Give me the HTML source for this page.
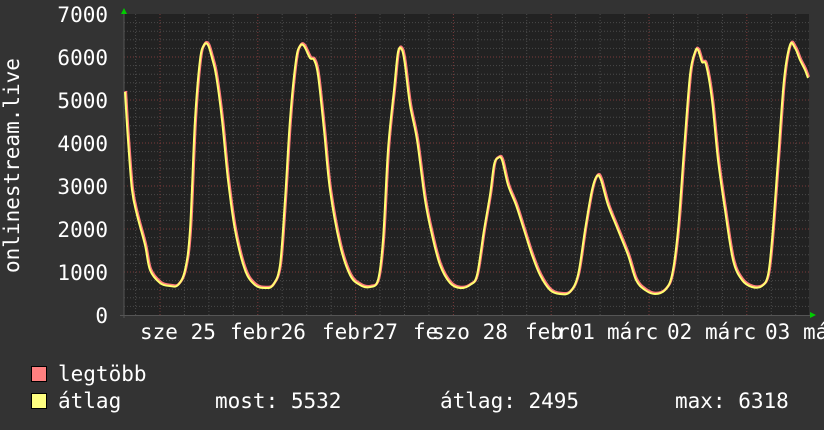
<!DOCTYPE html>
<html><head><meta charset="utf-8"><style>
html,body{margin:0;padding:0;background:#333;}
svg{display:block}
text{font-family:"DejaVu Sans Mono","Liberation Mono",monospace;font-size:21px;fill:#fff}
</style></head><body>
<svg width="824" height="430" viewBox="0 0 824 430" xmlns="http://www.w3.org/2000/svg">
<rect width="824" height="430" fill="#333"/>
<rect x="124" y="14" width="685" height="301" fill="#222"/>
<g id="grid"></g>
<line x1="124" y1="10" x2="124" y2="318" stroke="#555" stroke-width="1"/>
<line x1="120" y1="315.5" x2="810" y2="315.5" stroke="#555" stroke-width="1"/>
<polygon points="121,14 127,14 124,8" fill="#0c0"/>
<polygon points="810,312 810,318 816,315" fill="#0c0"/>
<path id="mx" fill="none" stroke="#ff7c7c" stroke-width="2.6" stroke-linejoin="round"/>
<path id="av" fill="none" stroke="#ffff70" stroke-width="2" stroke-linejoin="round"/>
<g text-anchor="end">
<text x="108" y="22">7000</text><text x="108" y="65">6000</text><text x="108" y="108">5000</text>
<text x="108" y="151">4000</text><text x="108" y="194">3000</text><text x="108" y="237">2000</text>
<text x="108" y="280">1000</text><text x="108" y="323">0</text>
</g>
<text transform="translate(19,273) rotate(-90)">onlinestream.live</text>
<text x="140" y="339">sze 25</text>
<text x="230" y="339">febr26</text>
<text x="322" y="339">febr27</text>
<text x="413" y="339">fe</text><text x="432" y="339">szo 28</text>
<text x="525" y="339">feb</text><text x="557" y="339">r01</text>
<text x="607" y="339">má</text><text x="633" y="339">rc</text><text x="667" y="339">02</text>
<text x="705" y="339">má</text><text x="731" y="339">rc</text><text x="765" y="339">03</text>
<text x="803" y="339">má</text>
<rect x="31.5" y="366.5" width="15" height="15" fill="#ff8080" stroke="#000"/>
<rect x="31.5" y="393.5" width="15" height="15" fill="#ffff80" stroke="#000"/>
<text x="58" y="381">legtöbb</text>
<text x="58" y="408">átlag</text>
<text x="215" y="408">most: 5532</text>
<text x="440" y="408">átlag: 2495</text>
<text x="675" y="408">max: 6318</text>
</svg>
<script>
var g=document.getElementById('grid'),s='';
for(var v=200;v<7000;v+=200){var y=315-v*0.043;var maj=v%1000==0;
s+='<line x1="124" x2="809" y1="'+y.toFixed(1)+'" y2="'+y.toFixed(1)+'" stroke="'+(maj?'#7a3a3a':'#4a4a4a')+'" stroke-dasharray="1,2"/>';}
for(var x=160-24.45*1;x<809;x+=24.45){if(x<125)continue;var k=Math.round((x-160)/24.45);var maj=k%4==0;
s+='<line y1="14" y2="315" x1="'+x.toFixed(1)+'" x2="'+x.toFixed(1)+'" stroke="'+(maj?'#7a3a3a':'#4a4a4a')+'" stroke-dasharray="1,2"/>';}
g.innerHTML=s;
var p=[125,92,128,140,132,190,137,215,145,245,150,270,160,283,170,286,178,285,185,270,190,230,195,120,200,60,204,45,208,45,212,58,216,75,222,120,228,180,235,230,245,270,255,285,265,288,273,285,280,265,285,200,290,120,296,60,300,46,304,46,310,58,314,60,318,75,324,130,330,190,340,245,350,275,360,285,370,287,378,280,383,240,388,150,394,90,398,52,402,50,405,65,410,105,417,140,425,200,432,235,440,265,450,283,460,288,470,285,477,275,484,230,490,195,494,165,498,158,502,160,508,185,516,205,524,230,532,255,540,275,550,290,560,294,570,292,578,275,585,230,592,190,597,176,601,180,608,205,618,230,628,255,636,280,645,290,655,294,665,290,672,275,678,230,684,150,690,75,695,52,698,50,702,62,706,65,712,100,718,160,725,210,733,260,742,280,752,287,762,286,768,275,772,240,778,160,784,80,790,45,795,48,800,60,805,70,808,78];
function path(dx,dy){var P=[];for(var i=0;i<p.length;i+=2)P.push([p[i]+dx,p[i+1]+dy]);
var d='M'+P[0][0]+','+P[0][1];
for(var i=0;i<P.length-1;i++){var p0=P[i-1]||P[i],p1=P[i],p2=P[i+1],p3=P[i+2]||p2;
var c1=[p1[0]+(p2[0]-p0[0])/6,p1[1]+(p2[1]-p0[1])/6],c2=[p2[0]-(p3[0]-p1[0])/6,p2[1]-(p3[1]-p1[1])/6];
d+=' C'+c1[0].toFixed(1)+','+c1[1].toFixed(1)+' '+c2[0].toFixed(1)+','+c2[1].toFixed(1)+' '+p2[0]+','+p2[1];}
return d;}
document.getElementById('mx').setAttribute('d',path(0.8,-1));
document.getElementById('av').setAttribute('d',path(0,0));
</script>
</body></html>
